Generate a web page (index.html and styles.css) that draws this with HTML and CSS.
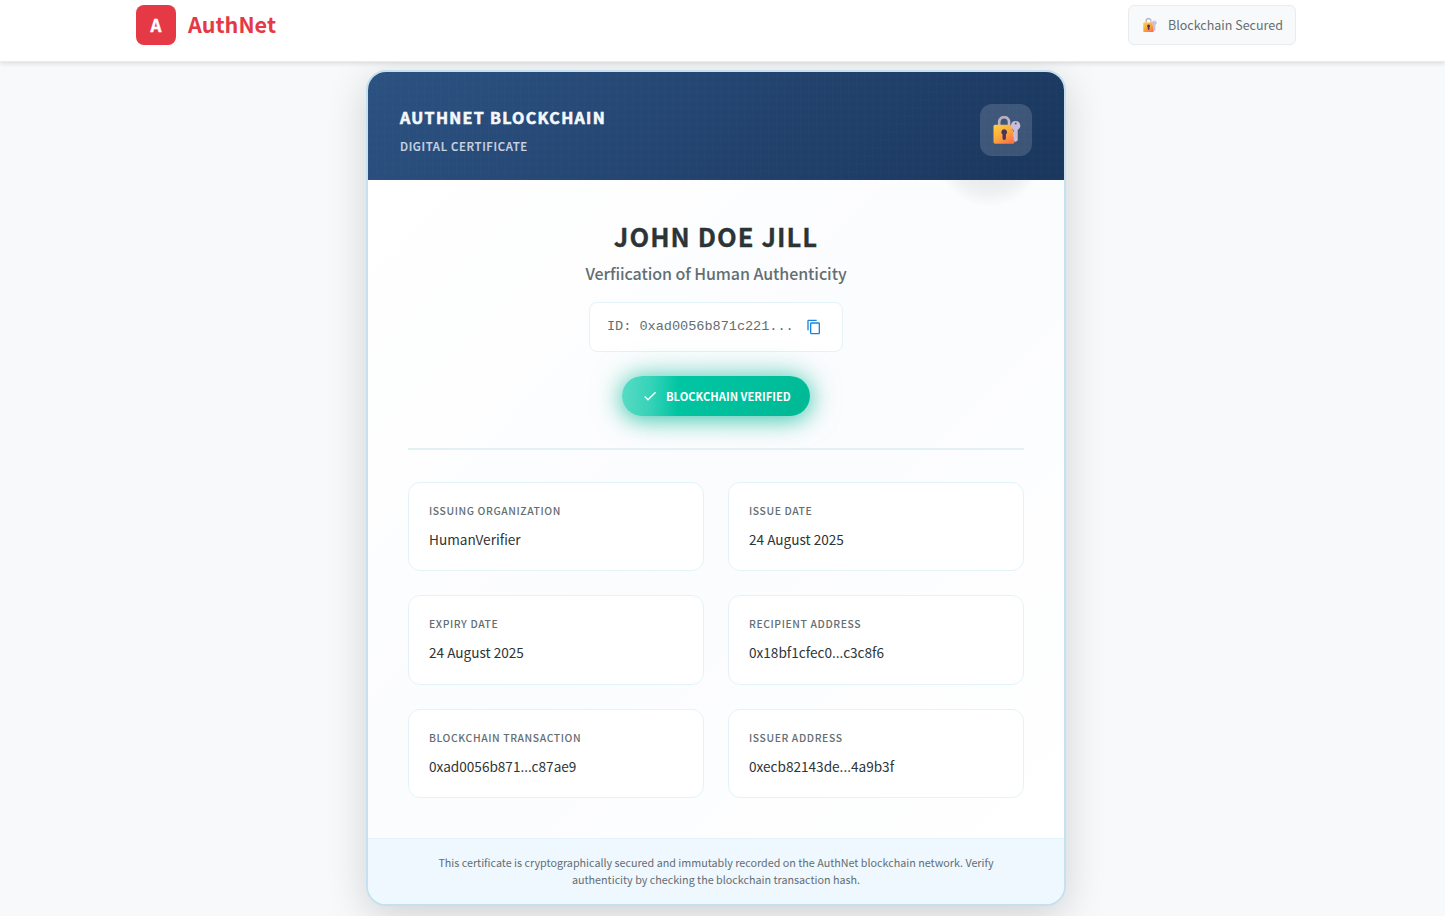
FILE: index.html
```html
<!DOCTYPE html>
<html lang="en">
<head>
<meta charset="utf-8">
<title>AuthNet Certificate</title>
<link rel="stylesheet" href="styles.css">
</head>
<body>
<svg class="defs" aria-hidden="true">
  <defs>
    <linearGradient id="gold" x1="0" y1="0" x2="0.7" y2="1"><stop offset="0" stop-color="#ffcf46"/><stop offset=".5" stop-color="#fbae3c"/><stop offset="1" stop-color="#fb7546"/></linearGradient>
    <linearGradient id="steel" x1="0" y1="0" x2="1" y2="1"><stop offset="0" stop-color="#b4abb8"/><stop offset="1" stop-color="#c9bdd4"/></linearGradient>
    <symbol id="lock-key" viewBox="0 0 28 28">
      <path d="M6.2 9.5V6a4.9 4.9 0 0 1 9.8 0v3.5" fill="none" stroke="url(#steel)" stroke-width="2.6"/>
      <path d="M2 8.8h14.5c.8 0 1.5.6 2 1.5l3 9v7.2l-1 1.3H2.2A1.7 1.7 0 0 1 .5 26V10.3A1.5 1.5 0 0 1 2 8.8Z" fill="url(#gold)"/>
      <path d="M11.2 13.2a3 3 0 0 0-1.7 5.4v3.6c0 1 .7 1.7 1.7 1.7s1.7-.7 1.7-1.7v-3.6a3 3 0 0 0-1.7-5.4Z" fill="#4b3459"/>
      <path fill-rule="evenodd" d="M22.7 5a4.7 4.7 0 0 0-2.4 8.8l.4 2-1.1 1.3 1.1 1.3-1.1 1.4 1.1 1.2v3.5l1.8 1.6 2.2-1.5V13.9A4.7 4.7 0 0 0 22.7 5Zm0 1.5a1 1 0 1 1 0 2 1 1 0 0 1 0-2Z" fill="#cabddb"/>
    </symbol>
  </defs>
</svg>
<header class="topbar">
  <div class="topbar-inner">
    <div class="brand"><span class="brand-mark">A</span><span class="brand-name">AuthNet</span></div>
    <div class="secured"><svg class="secured-icon"><use href="#lock-key"/></svg><span class="secured-text">Blockchain Secured</span></div>
  </div>
</header>
<main class="certificate">
  <section class="cert-header">
    <div class="cert-heading">
      <div class="cert-title">AUTHNET BLOCKCHAIN</div>
      <div class="cert-kind">DIGITAL CERTIFICATE</div>
    </div>
    <div class="cert-seal"><svg class="seal-icon"><use href="#lock-key"/></svg></div>
  </section>
  <section class="cert-body">
    <h1 class="holder">JOHN DOE JILL</h1>
    <div class="purpose">Verfiication of Human Authenticity</div>
    <div class="cert-id"><span class="id-text">ID: 0xad0056b871c221...</span><svg class="copy-icon" viewBox="0 0 24 24"><path fill="#1687e0" d="M16 1H4a2 2 0 0 0-2 2v14h2V3h12V1Zm3 4H8a2 2 0 0 0-2 2v14a2 2 0 0 0 2 2h11a2 2 0 0 0 2-2V7a2 2 0 0 0-2-2Zm0 16H8V7h11v14Z"/></svg></div>
    <div class="verified"><svg class="check-icon" viewBox="0 0 24 24"><path fill="#fff" d="M9 16.17 4.83 12l-1.42 1.41L9 19 21 7l-1.41-1.41z"/></svg><span class="verified-text">BLOCKCHAIN VERIFIED</span></div>
    <div class="details">
      <div class="detail"><div class="label">ISSUING ORGANIZATION</div><div class="value">HumanVerifier</div></div>
      <div class="detail"><div class="label">ISSUE DATE</div><div class="value">24 August 2025</div></div>
      <div class="detail"><div class="label">EXPIRY DATE</div><div class="value">24 August 2025</div></div>
      <div class="detail"><div class="label">RECIPIENT ADDRESS</div><div class="value">0x18bf1cfec0...c3c8f6</div></div>
      <div class="detail"><div class="label">BLOCKCHAIN TRANSACTION</div><div class="value">0xad0056b871...c87ae9</div></div>
      <div class="detail"><div class="label">ISSUER ADDRESS</div><div class="value">0xecb82143de...4a9b3f</div></div>
    </div>
  </section>
  <footer class="cert-footer">This certificate is cryptographically secured and immutably recorded on the AuthNet blockchain network. Verify<br>authenticity by checking the blockchain transaction hash.</footer>
</main>
</body>
</html>
```
FILE: styles.css
```css
* { box-sizing: border-box; }
body {
  margin: 0;
  height: 916px;
  overflow: hidden;
  background: #f8f9fb;
  color: #2d3436;
  font-family: "Noto Sans CJK SC", "Noto Sans", sans-serif;
}
.defs { position: absolute; width: 0; height: 0; }
.topbar {
  position: relative;
  z-index: 2;
  height: 62px;
  background: #fff;
  border-bottom: 1px solid #e9ecef;
  box-shadow: 0 2px 4px rgba(0, 0, 0, .1);
  padding-top: 5px;
}
.topbar-inner {
  width: 1160px;
  margin-left: 136px;
  display: flex;
  justify-content: space-between;
}
.brand { display: flex; align-items: center; gap: 12px; height: 40px; color: #e63946; }
.brand-mark {
  width: 40px; height: 40px; line-height: 40px;
  border-radius: 8px; background: #e63946; color: #fff;
  text-align: center; font-weight: 700; font-size: 17px;
  -webkit-text-stroke: .4px #fff;
}
.brand-name { font-size: 21.6px; font-weight: 700; line-height: 37px; height: 40px; }
.secured {
  width: 168px; height: 40px;
  display: flex; align-items: center;
  padding-left: 14px;
  border: 1px solid #e9ecef; border-radius: 6px;
  background: #f8f9fb;
}
.secured-icon { width: 14px; height: 14px; margin-right: 11px; }
.secured-text { font-size: 12.5px; line-height: 20px; color: #636e72; white-space: nowrap; }
.certificate {
  width: 700px; height: 836px;
  margin: 8px 0 0 366px;
  border: 2px solid #c3e1ee; border-radius: 20px;
  overflow: hidden;
  display: flex; flex-direction: column;
  background: #fff;
  box-shadow: 0 10px 40px rgba(0, 0, 0, .16);
}
.cert-header {
  height: 108px; padding: 31px 32px 32px; flex: none;
  display: flex; justify-content: space-between;
  background:
    repeating-linear-gradient(90deg, rgba(255,255,255,.012) 0 1px, transparent 1px 8px),
    repeating-linear-gradient(0deg, rgba(255,255,255,.012) 0 1px, transparent 1px 8px),
    linear-gradient(135deg, #2c5282, #1a365d);
}
.cert-title { font-size: 16px; line-height: 28px; font-weight: 700; letter-spacing: 1.3px; color: #f5f8fc; -webkit-text-stroke: .6px #f5f8fc; }
.cert-kind { font-size: 11.5px; line-height: 20px; margin-top: 5px; font-weight: 500; letter-spacing: .63px; color: #cbd5e1; -webkit-text-stroke: .2px #cbd5e1; }
.cert-seal {
  width: 52px; height: 52px; border-radius: 12px; margin-top: 1px;
  background: rgba(255, 255, 255, .15);
  display: grid; place-items: center;
}
.seal-icon { width: 28px; height: 28px; margin-left: 1px; }
.cert-body {
  height: 658px; padding: 38px 40px 40px; flex: none;
  display: flex; flex-direction: column; align-items: center;
  background:
    radial-gradient(circle at 621px -28px, rgba(0,0,0,.07) 28px, rgba(0,0,0,.05) 40px, rgba(0,0,0,0) 55px),
    linear-gradient(135deg, #fff 0%, #fbfcfe 50%, #fff 100%);
}
.holder { margin: 0; height: 36px; line-height: 36px; font-size: 25.6px; font-weight: 700; letter-spacing: 1.05px; -webkit-text-stroke: .3px #2d3436; }
.purpose { height: 30px; margin-top: 4px; line-height: 30px; font-size: 16px; font-weight: 500; letter-spacing: -.07px; color: #636e72; }
.cert-id {
  width: 254px; height: 50px; margin-top: 14px;
  display: flex; align-items: center; justify-content: space-between;
  padding: 0 20px 0 17px;
  border: 1px solid #e3f3f7; border-radius: 8px; background: #fff;
}
.id-text { font-family: "Courier New", "Liberation Mono", monospace; font-size: 13.6px; letter-spacing: -.04px; padding-bottom: 1px; color: #636e72; white-space: nowrap; }
.copy-icon { width: 16px; height: 16px; }
.verified {
  width: 188px; height: 40px; margin-top: 24px;
  display: flex; align-items: center; padding-left: 20px; gap: 8px;
  border-radius: 20px;
  background: linear-gradient(90deg, rgba(255,255,255,.34), rgba(255,255,255,.2) 16%, rgba(255,255,255,0) 30%), linear-gradient(135deg, #00cba9, #00b894);
  box-shadow: 0 4px 20px rgba(0, 184, 148, .45), 0 0 30px rgba(0, 184, 148, .5);
}
.check-icon { width: 16px; height: 16px; }
.verified-text { color: #fff; font-size: 11.2px; line-height: 20px; font-weight: 700; white-space: nowrap; }
.details {
  width: 616px; margin-top: 32px; padding-top: 32px;
  border-top: 2px solid #e3f1f5;
  display: grid; grid-template-columns: 1fr 1fr; gap: 24px;
}
.detail {
  height: 89.4px; padding: 18px 20px;
  border: 1px solid #e3f3f7; border-radius: 12px; background: #fff;
}
.label { font-size: 10.4px; line-height: 20px; font-weight: 500; letter-spacing: .6px; color: #636e72; }
.value { font-size: 13.6px; line-height: 24px; margin-top: 6px; }
.cert-footer {
  flex: 1; padding-top: 15px;
  border-top: 1px solid #e3f3f7; background: #eff7ff;
  text-align: center; font-size: 10.75px; line-height: 17px; color: #636e72;
}
```
